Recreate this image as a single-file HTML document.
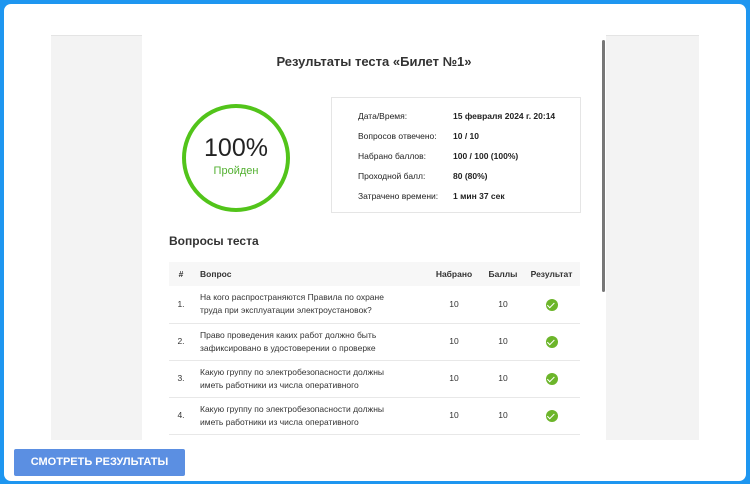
<!DOCTYPE html><html><head><meta charset="utf-8"><style>
*{margin:0;padding:0;box-sizing:border-box}
body{width:750px;height:484px;background:#1e96f0;font-family:"Liberation Sans",sans-serif;position:relative;overflow:hidden}
.card{position:absolute;left:4px;top:4px;width:742px;height:477px;background:#fff;border-radius:7px}
.gray{position:absolute;left:51px;top:35px;width:648px;height:405px;background:#f3f3f3;border-top:1px solid #e4e4e4}
.panel{position:absolute;left:142px;top:35px;width:464px;height:405px;background:#fff;overflow:hidden}
.sb{position:absolute;left:602px;top:40px;width:3px;height:252px;background:#777;border-radius:2px}
.title{position:absolute;left:0;width:464px;top:19px;text-align:center;font-weight:bold;font-size:13px;color:#333}
.circ{position:absolute;left:182px;top:104px;width:108px;height:108px;border:4px solid #52c41a;border-radius:50%;text-align:center}
.circ .p{font-size:25px;color:#222;margin-top:26px}
.circ .s{font-size:11px;color:#52b030;margin-top:2px}
.info{position:absolute;left:331px;top:97px;width:250px;height:116px;border:1px solid #e5e5e5;font-size:8.5px;color:#222}
.info div{position:absolute;left:26px}
.info b{position:absolute;left:121px;white-space:nowrap}
.h2{position:absolute;left:169px;top:234px;font-size:12px;font-weight:bold;color:#333}
table{position:absolute;left:169px;top:262px;width:411px;border-collapse:collapse;font-size:8.5px;color:#333}
th{background:#f7f7f7;height:24px;font-weight:bold;text-align:left}
td{height:37px;border-bottom:1px solid #e8e8e8;line-height:13px}
.c{text-align:center}
.ok{display:inline-block;width:12px;height:12px;border-radius:50%;background:#6cb52a;position:relative;vertical-align:middle}
.ok:after{content:"";position:absolute;left:3.5px;top:2px;width:3px;height:5.5px;border:solid #fff;border-width:0 1.5px 1.5px 0;transform:rotate(45deg)}
.btn{position:absolute;left:14px;top:449px;width:171px;height:27px;background:#5b8fe2;border-radius:2px;color:#fff;font-weight:bold;font-size:11px;text-align:center;line-height:27px}
</style></head><body>
<div class="card"></div>
<div class="gray"></div>
<div class="panel"><div class="title">Результаты теста «Билет №1»</div></div>
<div class="sb"></div>
<div class="circ"><div class="p">100%</div><div class="s">Пройден</div></div>
<div class="info">
<div style="top:13px">Дата/Время:</div><b style="top:13px">15 февраля 2024 г. 20:14</b>
<div style="top:33px">Вопросов отвечено:</div><b style="top:33px">10 / 10</b>
<div style="top:53px">Набрано баллов:</div><b style="top:53px">100 / 100 (100%)</b>
<div style="top:73px">Проходной балл:</div><b style="top:73px">80 (80%)</b>
<div style="top:93px">Затрачено времени:</div><b style="top:93px">1 мин 37 сек</b>
</div>
<div class="h2">Вопросы теста</div>
<table>
<tr><th class="c" style="width:24px">#</th><th style="padding-left:7px">Вопрос</th><th class="c" style="width:58px">Набрано</th><th class="c" style="width:40px">Баллы</th><th class="c" style="width:57px">Результат</th></tr>
<tr><td class="c">1.</td><td style="padding-left:7px">На кого распространяются Правила по охране<br>труда при эксплуатации электроустановок?</td><td class="c">10</td><td class="c">10</td><td class="c"><span class="ok"></span></td></tr>
<tr><td class="c">2.</td><td style="padding-left:7px">Право проведения каких работ должно быть<br>зафиксировано в удостоверении о проверке</td><td class="c">10</td><td class="c">10</td><td class="c"><span class="ok"></span></td></tr>
<tr><td class="c">3.</td><td style="padding-left:7px">Какую группу по электробезопасности должны<br>иметь работники из числа оперативного</td><td class="c">10</td><td class="c">10</td><td class="c"><span class="ok"></span></td></tr>
<tr><td class="c">4.</td><td style="padding-left:7px">Какую группу по электробезопасности должны<br>иметь работники из числа оперативного</td><td class="c">10</td><td class="c">10</td><td class="c"><span class="ok"></span></td></tr>
</table>
<div class="btn">СМОТРЕТЬ РЕЗУЛЬТАТЫ</div>
</body></html>
